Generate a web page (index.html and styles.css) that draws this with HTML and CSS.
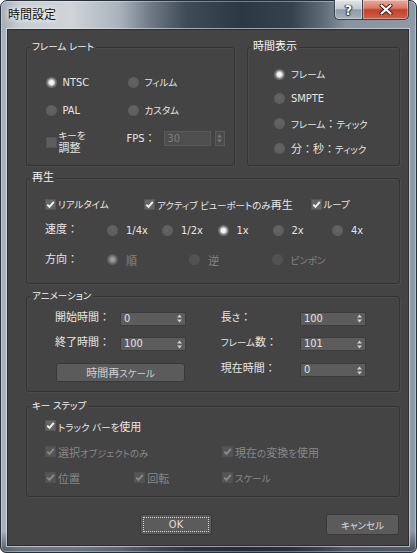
FILE: index.html
```html
<!DOCTYPE html>
<html lang="ja">
<head>
<meta charset="utf-8">
<title>時間設定</title>
<link rel="stylesheet" href="styles.css">
</head>
<body>
<div class="window">
  <div class="titlebar">
    <span class="title">時間設定</span>
    <div class="caption-buttons">
      <span class="cap-btn help">?</span>
      <span class="cap-btn close">
        <svg width="14" height="11" viewBox="0 0 14 11"><path d="M2.5 1.5 L11.5 9.5 M11.5 1.5 L2.5 9.5" stroke="#3a1a14" stroke-width="4" stroke-linecap="round"/><path d="M2.5 1.5 L11.5 9.5 M11.5 1.5 L2.5 9.5" stroke="#ffffff" stroke-width="2.2" stroke-linecap="round"/></svg>
      </span>
    </div>
  </div>
  <div class="client">
    <div class="top-row">
      <div class="group g-framerate">
        <span class="legend"><span class="kn">フレーム レート</span></span>
        <div class="fr-grid">
          <span class="radio"><i class="rb on"></i><span class="txt">NTSC</span></span>
          <span class="radio"><i class="rb"></i><span class="txt"><span class="kn">フィルム</span></span></span>
          <span class="radio"><i class="rb"></i><span class="txt">PAL</span></span>
          <span class="radio"><i class="rb"></i><span class="txt"><span class="kn">カスタム</span></span></span>
          <span class="check adjust"><i class="cb"></i><span class="txt two-line"><span class="kn">キーを</span><br>調整</span></span>
          <div class="fps">
            <span class="fps-label">FPS：</span>
            <span class="field fps-field disabled">30</span>
            <span class="spin-box disabled">
              <svg width="5" height="9" viewBox="0 0 5 9"><path d="M2.5 0.5 L5 3.5 L0 3.5 Z M0 5.5 L5 5.5 L2.5 8.5 Z" fill="#7a7a7a"/></svg>
            </span>
          </div>
        </div>
      </div>
      <div class="group g-timedisp">
        <span class="legend">時間表示</span>
        <div class="td-list">
          <span class="radio"><i class="rb on"></i><span class="txt"><span class="kn">フレーム</span></span></span>
          <span class="radio"><i class="rb"></i><span class="txt">SMPTE</span></span>
          <span class="radio"><i class="rb"></i><span class="txt"><span class="kn">フレーム</span>：<span class="kn">ティック</span></span></span>
          <span class="radio"><i class="rb"></i><span class="txt">分：秒：<span class="kn">ティック</span></span></span>
        </div>
      </div>
    </div>

    <div class="group g-playback">
      <span class="legend">再生</span>
      <div class="pb-row1">
        <span class="check"><i class="cb"><svg width="11" height="11" viewBox="0 0 11 11"><path d="M2.3 5.6 L4.5 7.9 L8.8 2.8" fill="none" stroke="#f2f2f2" stroke-width="1.9"/></svg></i><span class="txt"><span class="kn">リアルタイム</span></span></span>
        <span class="check"><i class="cb"><svg width="11" height="11" viewBox="0 0 11 11"><path d="M2.3 5.6 L4.5 7.9 L8.8 2.8" fill="none" stroke="#f2f2f2" stroke-width="1.9"/></svg></i><span class="txt"><span class="kn">アクティブ ビューポートのみ</span>再生</span></span>
        <span class="check"><i class="cb"><svg width="11" height="11" viewBox="0 0 11 11"><path d="M2.3 5.6 L4.5 7.9 L8.8 2.8" fill="none" stroke="#f2f2f2" stroke-width="1.9"/></svg></i><span class="txt"><span class="kn">ループ</span></span></span>
      </div>
      <div class="pb-row2">
        <span class="row-label">速度：</span>
        <span class="radio wide-gap"><i class="rb"></i><span class="txt">1/4x</span></span>
        <span class="radio wide-gap"><i class="rb"></i><span class="txt">1/2x</span></span>
        <span class="radio wide-gap"><i class="rb on"></i><span class="txt">1x</span></span>
        <span class="radio wide-gap"><i class="rb"></i><span class="txt">2x</span></span>
        <span class="radio wide-gap"><i class="rb"></i><span class="txt">4x</span></span>
      </div>
      <div class="pb-row3">
        <span class="row-label">方向：</span>
        <span class="radio wide-gap disabled"><i class="rb on"></i><span class="txt">順</span></span>
        <span class="radio wide-gap disabled"><i class="rb"></i><span class="txt">逆</span></span>
        <span class="radio wide-gap disabled"><i class="rb"></i><span class="txt"><span class="kn">ピンポン</span></span></span>
      </div>
    </div>

    <div class="group g-anim">
      <span class="legend"><span class="kn">アニメーション</span></span>
      <div class="anim-grid">
        <span class="a-label">開始時間：</span>
        <span class="field spinner"><span>0</span><svg width="5" height="9" viewBox="0 0 5 9"><path d="M2.5 0.5 L5 3.5 L0 3.5 Z M0 5.5 L5 5.5 L2.5 8.5 Z" fill="#d0d0d0"/></svg></span>
        <span></span>
        <span class="a-label">長<span class="kn">さ</span>：</span>
        <span class="field spinner"><span>100</span><svg width="5" height="9" viewBox="0 0 5 9"><path d="M2.5 0.5 L5 3.5 L0 3.5 Z M0 5.5 L5 5.5 L2.5 8.5 Z" fill="#d0d0d0"/></svg></span>

        <span class="a-label">終了時間：</span>
        <span class="field spinner"><span>100</span><svg width="5" height="9" viewBox="0 0 5 9"><path d="M2.5 0.5 L5 3.5 L0 3.5 Z M0 5.5 L5 5.5 L2.5 8.5 Z" fill="#d0d0d0"/></svg></span>
        <span></span>
        <span class="a-label"><span class="kn">フレーム</span>数：</span>
        <span class="field spinner"><span>101</span><svg width="5" height="9" viewBox="0 0 5 9"><path d="M2.5 0.5 L5 3.5 L0 3.5 Z M0 5.5 L5 5.5 L2.5 8.5 Z" fill="#d0d0d0"/></svg></span>

        <span class="btn rescale"><span class="txt">時間再<span class="kn">スケール</span></span></span>
        <span></span>
        <span class="a-label">現在時間：</span>
        <span class="field spinner"><span>0</span><svg width="5" height="9" viewBox="0 0 5 9"><path d="M2.5 0.5 L5 3.5 L0 3.5 Z M0 5.5 L5 5.5 L2.5 8.5 Z" fill="#d0d0d0"/></svg></span>
      </div>
    </div>

    <div class="group g-keystep">
      <span class="legend"><span class="kn">キー ステップ</span></span>
      <div class="ks-grid">
        <span class="check span3"><i class="cb"><svg width="11" height="11" viewBox="0 0 11 11"><path d="M2.3 5.6 L4.5 7.9 L8.8 2.8" fill="none" stroke="#f2f2f2" stroke-width="1.9"/></svg></i><span class="txt"><span class="kn">トラック バーを</span>使用</span></span>
        <span class="check disabled span2"><i class="cb"><svg width="11" height="11" viewBox="0 0 11 11"><path d="M2.3 5.6 L4.5 7.9 L8.8 2.8" fill="none" stroke="#8a8a8a" stroke-width="1.9"/></svg></i><span class="txt">選択<span class="kn">オブジェクトのみ</span></span></span>
        <span class="check disabled"><i class="cb"><svg width="11" height="11" viewBox="0 0 11 11"><path d="M2.3 5.6 L4.5 7.9 L8.8 2.8" fill="none" stroke="#8a8a8a" stroke-width="1.9"/></svg></i><span class="txt">現在<span class="kn">の</span>変換<span class="kn">を</span>使用</span></span>
        <span class="check disabled"><i class="cb"><svg width="11" height="11" viewBox="0 0 11 11"><path d="M2.3 5.6 L4.5 7.9 L8.8 2.8" fill="none" stroke="#8a8a8a" stroke-width="1.9"/></svg></i><span class="txt">位置</span></span>
        <span class="check disabled"><i class="cb"><svg width="11" height="11" viewBox="0 0 11 11"><path d="M2.3 5.6 L4.5 7.9 L8.8 2.8" fill="none" stroke="#8a8a8a" stroke-width="1.9"/></svg></i><span class="txt">回転</span></span>
        <span class="check disabled"><i class="cb"><svg width="11" height="11" viewBox="0 0 11 11"><path d="M2.3 5.6 L4.5 7.9 L8.8 2.8" fill="none" stroke="#8a8a8a" stroke-width="1.9"/></svg></i><span class="txt"><span class="kn">スケール</span></span></span>
      </div>
    </div>

    <div class="btn-row">
      <span class="btn dlg-btn ok"><span class="focus">OK</span></span>
      <span class="btn dlg-btn cancel"><span class="txt"><span class="kn">キャンセル</span></span></span>
    </div>
  </div>
</div>
</body>
</html>
```

FILE: styles.css
```css
* { box-sizing: border-box; }

html, body {
  margin: 0;
  padding: 0;
}

body {
  width: 417px;
  height: 553px;
  overflow: hidden;
  background: #ffffff;
  font-family: "DejaVu Sans Condensed", "DejaVu Sans", "Noto Sans CJK JP", sans-serif;
  font-stretch: condensed;
  font-size: 11px;
  color: #e6e6e6;
}

/* kana runs: the original UI font sets kana smaller and proportional */
.kn {
  font-size: 9.5px;
  font-feature-settings: "palt";
}

.txt { white-space: nowrap; }

/* ---------- window frame ---------- */
.window {
  width: 417px;
  height: 553px;
  border: 1px solid #26303a;
  border-radius: 7px 7px 6px 6px;
  padding: 0 7px 6px 6px;
  display: flex;
  flex-direction: column;
  background:
    linear-gradient(180deg, rgba(20, 30, 40, 0) 0, rgba(20, 30, 40, 0) 530px, rgba(25, 35, 45, 0.55) 548px),
    linear-gradient(90deg, #a3adb7 0, #c6ccd2 18px, #cfd4d9 70px, #aab3bc 118px, #6e7985 150px, #3f4b57 185px, #2c3844 240px, #35414d 290px, #5c6874 320px, #8794a0 345px, #8e9aa6 417px);
  box-shadow: inset 0 0 0 1px rgba(255, 255, 255, 0.35);
}

.titlebar {
  height: 28px;
  flex: none;
  display: flex;
  align-items: flex-start;
}

.title {
  margin: 5px 0 0 1px;
  font-family: "Noto Sans CJK JP", sans-serif;
  font-size: 12px;
  line-height: 16px;
  color: #101010;
  text-shadow: 0 0 4px #ffffff, 0 0 8px rgba(255, 255, 255, 0.8);
}

.caption-buttons {
  margin-left: auto;
  margin-top: -1px;
  display: flex;
}

.cap-btn {
  height: 20px;
  display: flex;
  align-items: center;
  justify-content: center;
  border: 1px solid #3b434c;
  border-top: none;
  box-shadow: inset 0 0 0 1px rgba(255, 255, 255, 0.35);
}

.help {
  width: 28px;
  border-right: none;
  border-radius: 0 0 0 5px;
  background: linear-gradient(180deg, #e2e6ea 0, #c3cad1 45%, #8f9ba6 52%, #a7b1ba 100%);
  font-family: "DejaVu Sans", sans-serif;
  font-weight: bold;
  font-size: 14px;
  color: #ffffff;
  text-shadow: 0 0 1px #2a3038, 1px 0 1px #2a3038, -1px 0 1px #2a3038, 0 1px 1px #2a3038;
}

.close {
  width: 47px;
  border-radius: 0 0 5px 0;
  background: linear-gradient(180deg, #eaab9e 0, #d97a66 42%, #c4402a 52%, #d06149 100%);
}

/* ---------- client area ---------- */
.client {
  flex: 1;
  background: #444444;
  border: 1px solid #2a2e33;
  box-shadow: 0 0 0 1px rgba(228, 233, 238, 0.6);
  padding: 17px 8px 0 18px;
  display: flex;
  flex-direction: column;
}

.group {
  position: relative;
  border: 1px solid #343434;
  border-radius: 3px;
  box-shadow: inset 1px 1px 0 #4b4b4b, 1px 1px 0 #4b4b4b;
}

.legend {
  position: absolute;
  top: -8px;
  left: 3px;
  padding: 0 2px;
  line-height: 14px;
  background: #444444;
  color: #f2f2f2;
  white-space: nowrap;
}

.top-row {
  display: flex;
  gap: 12px;
  height: 119px;
  flex: none;
}

.g-framerate { width: 209px; }
.g-timedisp { flex: 1; }

/* radios / checks */
.radio, .check {
  display: flex;
  align-items: center;
  white-space: nowrap;
  height: 16px;
}

.rb {
  width: 11px;
  height: 11px;
  flex: none;
  margin-right: 6px;
  border-radius: 50%;
  background: radial-gradient(circle at 50% 40%, #656565 0, #5c5c5c 70%, #545454 100%);
}

.radio.wide-gap .rb { margin-right: 8px; }

.rb.on {
  background: radial-gradient(circle, #fbfbfb 0, #f0f0f0 2px, #b9b9b9 3.2px, #7a7a7a 4.2px, #6a6a6a 5.5px);
}

.radio.disabled { color: #858585; }
.radio.disabled .rb { background: #525252; }
.radio.disabled .rb.on {
  background: radial-gradient(circle, #a0a0a0 0, #959595 2px, #767676 3.4px, #606060 4.5px, #585858 5.5px);
}

.cb {
  width: 11px;
  height: 11px;
  flex: none;
  margin-right: 2px;
  display: block;
  background: #666666;
  border: 1px solid #575757;
  position: relative;
}

.cb svg {
  position: absolute;
  left: -1px;
  top: -1px;
}

.check.disabled { color: #878787; }
.check.disabled .cb { background: #555555; border-color: #515151; }

/* frame rate group */
.fr-grid {
  display: grid;
  grid-template-columns: 82px auto;
  grid-template-rows: 16px 16px 25px;
  row-gap: 12px;
  padding: 26px 0 0 18.5px;
}

.check.adjust {
  height: 25px;
  align-items: center;
}

.check.adjust .cb { background: #5e5e5e; border-color: #545454; }

.two-line {
  line-height: 12.5px;
}

.fps {
  display: flex;
  align-items: flex-start;
  margin-left: -1px;
}

.fps-label {
  width: 37px;
  line-height: 15px;
  margin-top: 1px;
  color: #e6e6e6;
}

.field {
  display: flex;
  align-items: center;
  height: 14px;
  background: #5c5c5c;
  border: 1px solid #3c3c3c;
  color: #e2e2e2;
  line-height: 12px;
  padding: 0 3px;
}

.fps-field {
  width: 47px;
  height: 15px;
  margin-top: 1px;
  background: #4e4e4e;
  border-color: #595959;
  color: #7e7e7e;
}

.spin-box {
  width: 10px;
  height: 15px;
  margin-top: 1px;
  margin-left: 4px;
  display: flex;
  align-items: center;
  justify-content: center;
  background: #4b4b4b;
  border: 1px solid #5a5a5a;
}

/* time display group */
.td-list {
  display: flex;
  flex-direction: column;
  gap: 8.7px;
  padding: 18px 0 0 26px;
}

/* playback group */
.g-playback {
  margin-top: 12px;
  height: 106px;
  flex: none;
  padding-left: 18px;
}

.pb-row1 {
  display: grid;
  grid-template-columns: 99px 166.5px auto;
  margin-top: 17px;
}

.pb-row2 {
  display: grid;
  grid-template-columns: 62px 55px 55.5px 55px 59.5px auto;
  margin-top: 10px;
}

.pb-row3 {
  display: grid;
  grid-template-columns: 62px 82.3px 82.3px auto;
  margin-top: 13.7px;
}

.row-label {
  line-height: 16px;
  white-space: nowrap;
}

/* animation group */
.g-anim {
  margin-top: 12px;
  height: 96px;
  flex: none;
}

.anim-grid {
  display: grid;
  grid-template-columns: 65px 66px 34.7px 79.3px 66px;
  grid-template-rows: 14px 14px 19px;
  row-gap: 11.7px;
  padding: 14.7px 0 0 28px;
  align-items: start;
}

.a-label {
  line-height: 14px;
  white-space: nowrap;
  margin-top: -1px;
}

.spinner {
  justify-content: space-between;
}

.spinner svg { flex: none; }

.btn {
  display: flex;
  align-items: center;
  justify-content: center;
  background: #5b5b5b;
  border: 1px solid #393939;
  border-radius: 3px;
  color: #dedede;
  white-space: nowrap;
}

.rescale {
  grid-column: 1 / span 2;
  height: 19px;
  margin: -0.5px 1px 0 1px;
  color: #cfcfcf;
}

/* key step group */
.g-keystep {
  margin-top: 14px;
  height: 91px;
  flex: none;
}

.ks-grid {
  display: grid;
  grid-template-columns: 89.3px 87.7px auto;
  grid-auto-rows: 16px;
  row-gap: 10px;
  padding: 10.7px 0 0 18px;
}

.span3 { grid-column: 1 / span 3; }
.span2 { grid-column: 1 / span 2; }

/* dialog buttons */
.btn-row {
  display: flex;
  gap: 114px;
  margin-top: 17px;
  padding-left: 114px;
}

.dlg-btn {
  height: 21px;
}

.ok {
  width: 72px;
  padding: 2px;
}

.ok .focus {
  flex: 1;
  align-self: stretch;
  display: flex;
  align-items: center;
  justify-content: center;
  border: 1px dotted #d0d0d0;
  border-radius: 1px;
}

.cancel {
  width: 73px;
}
```
